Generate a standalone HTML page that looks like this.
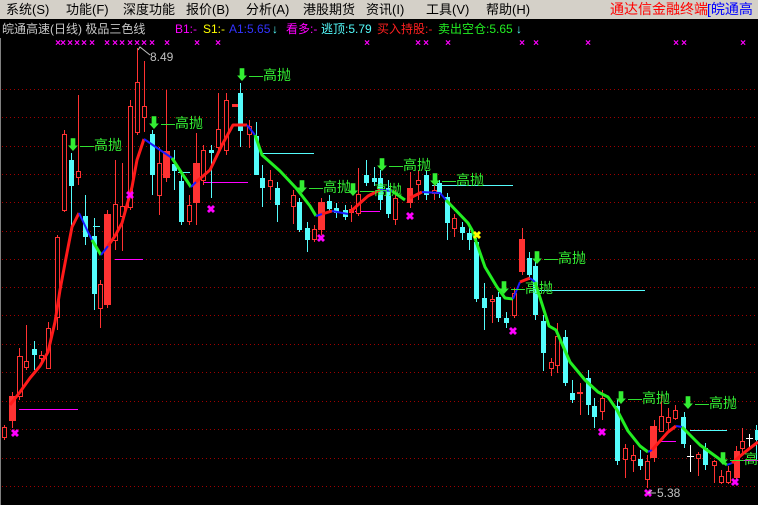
<!DOCTYPE html><html><head><meta charset="utf-8"><style>
body{margin:0;width:758px;height:505px;overflow:hidden;background:#000;font-family:"Liberation Sans","WenQuanYi Zen Hei",sans-serif}
#menu{position:absolute;left:0;top:0;width:758px;height:19px;background:#d4d0c8;font-size:13px;line-height:19px;white-space:nowrap}
#menu span{position:absolute;top:0}
#t{position:absolute;top:19px;left:0;width:758px;height:20px;font-size:12px;line-height:20px;white-space:nowrap}
#t span{position:absolute;top:0}
svg{position:absolute;left:0;top:0}
</style></head><body>
<svg width="758" height="505" viewBox="0 0 758 505">
<line x1="0.5" y1="38" x2="0.5" y2="505" stroke="#808080"/>
<g stroke="#a00000" stroke-dasharray="1,3">
<line x1="2" y1="89.5" x2="758" y2="89.5"/><line x1="2" y1="117.5" x2="758" y2="117.5"/><line x1="2" y1="146.5" x2="758" y2="146.5"/><line x1="2" y1="174.5" x2="758" y2="174.5"/><line x1="2" y1="202.5" x2="758" y2="202.5"/><line x1="2" y1="231.5" x2="758" y2="231.5"/><line x1="2" y1="259.5" x2="758" y2="259.5"/><line x1="2" y1="287.5" x2="758" y2="287.5"/><line x1="2" y1="315.5" x2="758" y2="315.5"/><line x1="2" y1="344.5" x2="758" y2="344.5"/><line x1="2" y1="372.5" x2="758" y2="372.5"/><line x1="2" y1="401.5" x2="758" y2="401.5"/><line x1="2" y1="429.5" x2="758" y2="429.5"/><line x1="2" y1="458.5" x2="758" y2="458.5"/><line x1="2" y1="486.5" x2="758" y2="486.5"/>
</g>
<g stroke-width="1">
<line x1="19" y1="409.5" x2="78" y2="409.5" stroke="#ff00ff"/>
<line x1="115" y1="259.5" x2="143" y2="259.5" stroke="#ff00ff"/>
<line x1="203" y1="182.5" x2="248" y2="182.5" stroke="#ff00ff"/>
<line x1="263" y1="153.5" x2="314" y2="153.5" stroke="#54fcfc"/>
<line x1="355" y1="211.5" x2="380" y2="211.5" stroke="#ff00ff"/>
<line x1="432" y1="185.5" x2="513" y2="185.5" stroke="#54fcfc"/>
<line x1="530" y1="290.5" x2="645" y2="290.5" stroke="#54fcfc"/>
<line x1="661" y1="441.5" x2="676" y2="441.5" stroke="#ff00ff"/>
<line x1="690" y1="430.5" x2="727" y2="430.5" stroke="#54fcfc"/>
<line x1="742" y1="460.5" x2="758" y2="460.5" stroke="#ff00ff"/>
<line x1="93" y1="226.5" x2="100" y2="226.5" stroke="#54fcfc"/>
<line x1="178" y1="172.5" x2="190" y2="172.5" stroke="#54fcfc"/>
</g>
<g stroke="#ff3232">
<line x1="4.5" y1="425" x2="4.5" y2="440"/><line x1="12.5" y1="392" x2="12.5" y2="428"/><line x1="19.5" y1="348" x2="19.5" y2="400"/><line x1="26.5" y1="325" x2="26.5" y2="370"/><line x1="41.5" y1="351" x2="41.5" y2="364"/><line x1="48.5" y1="322" x2="48.5" y2="369"/><line x1="57.5" y1="235" x2="57.5" y2="330"/><line x1="64.5" y1="130" x2="64.5" y2="212"/><line x1="78.5" y1="95" x2="78.5" y2="185"/><line x1="100.5" y1="280" x2="100.5" y2="328"/><line x1="107.5" y1="210" x2="107.5" y2="308"/><line x1="115.5" y1="160" x2="115.5" y2="250"/><line x1="122.5" y1="163" x2="122.5" y2="251"/><line x1="130.5" y1="100" x2="130.5" y2="210"/><line x1="137.5" y1="48" x2="137.5" y2="135"/><line x1="144.5" y1="61" x2="144.5" y2="132"/><line x1="159.5" y1="147" x2="159.5" y2="215"/><line x1="166.5" y1="90" x2="166.5" y2="182"/><line x1="189.5" y1="195" x2="189.5" y2="225"/><line x1="196.5" y1="133" x2="196.5" y2="225"/><line x1="203.5" y1="145" x2="203.5" y2="185"/><line x1="218.5" y1="93" x2="218.5" y2="150"/><line x1="226.5" y1="93" x2="226.5" y2="155"/><line x1="249.5" y1="120" x2="249.5" y2="148"/><line x1="270.5" y1="170" x2="270.5" y2="200"/><line x1="293.5" y1="190" x2="293.5" y2="224"/><line x1="314.5" y1="225" x2="314.5" y2="242"/><line x1="321.5" y1="198" x2="321.5" y2="235"/><line x1="351.5" y1="205" x2="351.5" y2="222"/><line x1="358.5" y1="168" x2="358.5" y2="216"/><line x1="395.5" y1="190" x2="395.5" y2="225"/><line x1="410.5" y1="172" x2="410.5" y2="208"/><line x1="418.5" y1="170" x2="418.5" y2="200"/><line x1="434.5" y1="185" x2="434.5" y2="200"/><line x1="454.5" y1="214" x2="454.5" y2="237"/><line x1="492.5" y1="295" x2="492.5" y2="323"/><line x1="514.5" y1="288" x2="514.5" y2="318"/><line x1="522.5" y1="228" x2="522.5" y2="275"/><line x1="551.5" y1="358" x2="551.5" y2="376"/><line x1="557.5" y1="323" x2="557.5" y2="373"/><line x1="580.5" y1="383" x2="580.5" y2="415"/><line x1="602.5" y1="390" x2="602.5" y2="420"/><line x1="625.5" y1="444" x2="625.5" y2="478"/><line x1="633.5" y1="445" x2="633.5" y2="472"/><line x1="647.5" y1="455" x2="647.5" y2="488"/><line x1="654.5" y1="420" x2="654.5" y2="462"/><line x1="661.5" y1="395" x2="661.5" y2="432"/><line x1="668.5" y1="408" x2="668.5" y2="430"/><line x1="675.5" y1="405" x2="675.5" y2="420"/><line x1="698.5" y1="452" x2="698.5" y2="476"/><line x1="714.5" y1="460" x2="714.5" y2="483"/><line x1="721.5" y1="470" x2="721.5" y2="484"/><line x1="728.5" y1="466" x2="728.5" y2="484"/><line x1="736.5" y1="446" x2="736.5" y2="480"/><line x1="742.5" y1="428" x2="742.5" y2="455"/>
</g>
<g stroke="#54fcfc">
<line x1="34.5" y1="341" x2="34.5" y2="370"/><line x1="71.5" y1="153" x2="71.5" y2="230"/><line x1="85.5" y1="195" x2="85.5" y2="245"/><line x1="94.5" y1="218" x2="94.5" y2="310"/><line x1="152.5" y1="130" x2="152.5" y2="195"/><line x1="174.5" y1="150" x2="174.5" y2="190"/><line x1="181.5" y1="175" x2="181.5" y2="225"/><line x1="211.5" y1="145" x2="211.5" y2="198"/><line x1="240.5" y1="83" x2="240.5" y2="147"/><line x1="256.5" y1="122" x2="256.5" y2="175"/><line x1="262.5" y1="165" x2="262.5" y2="207"/><line x1="277.5" y1="182" x2="277.5" y2="222"/><line x1="299.5" y1="198" x2="299.5" y2="232"/><line x1="307.5" y1="222" x2="307.5" y2="252"/><line x1="329.5" y1="195" x2="329.5" y2="213"/><line x1="336.5" y1="203" x2="336.5" y2="218"/><line x1="345.5" y1="205" x2="345.5" y2="220"/><line x1="366.5" y1="160" x2="366.5" y2="186"/><line x1="374.5" y1="167" x2="374.5" y2="186"/><line x1="380.5" y1="170" x2="380.5" y2="210"/><line x1="388.5" y1="180" x2="388.5" y2="218"/><line x1="426.5" y1="170" x2="426.5" y2="200"/><line x1="439.5" y1="180" x2="439.5" y2="198"/><line x1="447.5" y1="193" x2="447.5" y2="240"/><line x1="462.5" y1="222" x2="462.5" y2="240"/><line x1="469.5" y1="228" x2="469.5" y2="250"/><line x1="476.5" y1="238" x2="476.5" y2="302"/><line x1="484.5" y1="283" x2="484.5" y2="330"/><line x1="498.5" y1="292" x2="498.5" y2="322"/><line x1="506.5" y1="312" x2="506.5" y2="328"/><line x1="529.5" y1="252" x2="529.5" y2="280"/><line x1="535.5" y1="262" x2="535.5" y2="320"/><line x1="543.5" y1="315" x2="543.5" y2="371"/><line x1="565.5" y1="330" x2="565.5" y2="386"/><line x1="572.5" y1="380" x2="572.5" y2="403"/><line x1="588.5" y1="370" x2="588.5" y2="415"/><line x1="594.5" y1="398" x2="594.5" y2="428"/><line x1="617.5" y1="400" x2="617.5" y2="465"/><line x1="640.5" y1="450" x2="640.5" y2="470"/><line x1="684.5" y1="412" x2="684.5" y2="448"/><line x1="705.5" y1="443" x2="705.5" y2="470"/><line x1="756.5" y1="425" x2="756.5" y2="460"/>
</g>
<g stroke="#fff"><line x1="690.5" y1="445" x2="690.5" y2="472"/><line x1="687" y1="456.5" x2="694" y2="456.5"/><line x1="749.5" y1="434" x2="749.5" y2="447"/><line x1="746" y1="438.5" x2="753" y2="438.5"/></g>
<g fill="#000" stroke="#ff3232">
<rect x="2.5" y="427.5" width="4" height="10"/><rect x="17.5" y="356.5" width="5" height="40"/><rect x="24.5" y="361.5" width="4" height="6"/><rect x="39.5" y="355.5" width="4" height="3"/><rect x="46.5" y="328.5" width="4" height="40"/><rect x="55.5" y="237.5" width="4" height="80"/><rect x="62.5" y="134.5" width="4" height="76"/><rect x="76.5" y="171.5" width="4" height="6"/><rect x="98.5" y="284.5" width="4" height="24"/><rect x="113.5" y="204.5" width="4" height="36"/><rect x="120.5" y="206.5" width="4" height="10"/><rect x="128.5" y="106.5" width="4" height="101"/><rect x="135.5" y="82.5" width="4" height="50"/><rect x="142.5" y="106.5" width="4" height="11"/><rect x="157.5" y="163.5" width="4" height="32"/><rect x="187.5" y="205.5" width="4" height="16"/><rect x="201.5" y="150.5" width="4" height="30"/><rect x="216.5" y="129.5" width="4" height="18"/><rect x="224.5" y="100.5" width="4" height="50"/><rect x="247.5" y="126.5" width="4" height="8"/><rect x="268.5" y="180.5" width="4" height="6"/><rect x="291.5" y="195.5" width="4" height="11"/><rect x="312.5" y="229.5" width="4" height="10"/><rect x="356.5" y="194.5" width="4" height="19"/><rect x="393.5" y="198.5" width="4" height="21"/><rect x="416.5" y="180.5" width="4" height="4"/><rect x="432.5" y="190.5" width="4" height="3"/><rect x="452.5" y="218.5" width="4" height="10"/><rect x="490.5" y="299.5" width="4" height="2"/><rect x="512.5" y="293.5" width="4" height="22"/><rect x="549.5" y="362.5" width="4" height="6"/><rect x="555.5" y="336.5" width="4" height="29"/><rect x="600.5" y="398.5" width="4" height="13"/><rect x="623.5" y="448.5" width="4" height="11"/><rect x="631.5" y="455.5" width="4" height="5"/><rect x="645.5" y="461.5" width="4" height="18"/><rect x="659.5" y="416.5" width="4" height="15"/><rect x="666.5" y="417.5" width="4" height="5"/><rect x="673.5" y="410.5" width="4" height="8"/><rect x="696.5" y="454.5" width="4" height="4"/><rect x="712.5" y="461.5" width="4" height="4"/><rect x="719.5" y="476.5" width="4" height="6"/><rect x="726.5" y="471.5" width="4" height="11"/><rect x="740.5" y="441.5" width="4" height="7"/>
</g>
<g fill="#ff3232">
<rect x="9" y="396" width="7" height="25"/><rect x="104" y="214" width="7" height="91"/><rect x="163" y="151" width="7" height="27"/><rect x="193" y="163" width="7" height="40"/><rect x="232" y="104" width="6" height="3"/><rect x="318" y="202" width="7" height="28"/><rect x="349" y="209" width="5" height="4"/><rect x="407" y="188" width="6" height="15"/><rect x="519" y="239" width="6" height="33"/><rect x="577" y="392" width="6" height="2"/><rect x="650" y="426" width="7" height="32"/><rect x="734" y="451" width="6" height="27"/>
</g>
<g fill="#54fcfc">
<rect x="32" y="349" width="5" height="6"/><rect x="69" y="160" width="5" height="26"/><rect x="83" y="216" width="5" height="21"/><rect x="92" y="236" width="5" height="58"/><rect x="150" y="134" width="5" height="41"/><rect x="172" y="164" width="5" height="7"/><rect x="179" y="181" width="5" height="41"/><rect x="209" y="150" width="5" height="3"/><rect x="238" y="93" width="5" height="38"/><rect x="254" y="136" width="5" height="39"/><rect x="260" y="178" width="5" height="10"/><rect x="275" y="188" width="5" height="17"/><rect x="297" y="202" width="5" height="28"/><rect x="305" y="228" width="5" height="12"/><rect x="327" y="201" width="5" height="8"/><rect x="334" y="208" width="5" height="5"/><rect x="343" y="210" width="5" height="7"/><rect x="364" y="175" width="5" height="8"/><rect x="372" y="178" width="5" height="4"/><rect x="378" y="178" width="5" height="22"/><rect x="386" y="188" width="5" height="26"/><rect x="424" y="175" width="5" height="20"/><rect x="437" y="183" width="5" height="11"/><rect x="445" y="197" width="5" height="26"/><rect x="460" y="227" width="5" height="6"/><rect x="467" y="233" width="5" height="7"/><rect x="474" y="242" width="5" height="57"/><rect x="482" y="298" width="5" height="10"/><rect x="496" y="297" width="5" height="21"/><rect x="504" y="318" width="5" height="5"/><rect x="527" y="258" width="5" height="17"/><rect x="533" y="266" width="5" height="49"/><rect x="541" y="321" width="5" height="32"/><rect x="563" y="337" width="5" height="46"/><rect x="570" y="393" width="5" height="7"/><rect x="586" y="378" width="5" height="27"/><rect x="592" y="406" width="5" height="11"/><rect x="615" y="406" width="5" height="55"/><rect x="638" y="459" width="5" height="7"/><rect x="681" y="417" width="5" height="27"/><rect x="703" y="448" width="5" height="17"/><rect x="755" y="430" width="3" height="10"/>
</g>
<g fill="none" stroke-width="3" stroke-linejoin="round">
<polyline stroke="#ff1a1a" points="10,405 20,392 30,378 40,366 48,352 55,322 60,290 66,258 72,227 79,213"/>
<polyline stroke="#1a1aff" stroke-width="2" points="79,213 88,232 92,240"/>
<polyline stroke="#22ee22" points="92,240 101,255"/>
<polyline stroke="#1a1aff" stroke-width="2" points="101,255 108,246"/>
<polyline stroke="#ff1a1a" points="108,246 115,236 122,223 132,187 137,160 144,139"/>
<polyline stroke="#1a1aff" stroke-width="2" points="144,139 160,150 172,158"/>
<polyline stroke="#22ee22" points="172,158 183,175 191,187"/>
<polyline stroke="#1a1aff" stroke-width="2" points="191,187 196,182"/>
<polyline stroke="#ff1a1a" points="196,182 210,170 222,145 233,125 247,125"/>
<polyline stroke="#1a1aff" stroke-width="2" points="247,125 255,135"/>
<polyline stroke="#22ee22" points="255,135 262,155 280,171 296,188 310,206 316,216"/>
<polyline stroke="#1a1aff" stroke-width="2" points="316,216 322,214"/>
<polyline stroke="#ff1a1a" points="322,214 332,211"/>
<polyline stroke="#1a1aff" stroke-width="2" points="332,211 348,214"/>
<polyline stroke="#ff1a1a" points="350,212 368,196 380,190"/>
<polyline stroke="#1a1aff" stroke-width="2" points="380,190 392,191"/>
<polyline stroke="#22ee22" points="392,191 405,200"/>
<polyline stroke="#ff1a1a" points="410,198 422,192"/>
<polyline stroke="#1a1aff" stroke-width="2" points="422,192 440,193 446,200"/>
<polyline stroke="#22ee22" points="446,200 468,223 472,230 485,267 497,287 505,298 513,299"/>
<polyline stroke="#1a1aff" stroke-width="2" points="513,299 520,282"/>
<polyline stroke="#ff1a1a" points="520,282 530,278"/>
<polyline stroke="#1a1aff" stroke-width="2" points="530,278 535,282"/>
<polyline stroke="#22ee22" points="535,282 549,326 556,330 570,362 585,380 598,392 608,397 617,410 628,431 640,446 648,452"/>
<polyline stroke="#1a1aff" stroke-width="2" points="648,452 652,450"/>
<polyline stroke="#ff1a1a" points="652,450 668,432 676,426"/>
<polyline stroke="#1a1aff" stroke-width="2" points="676,426 682,427"/>
<polyline stroke="#22ee22" points="682,427 700,445 718,458 727,465"/>
<polyline stroke="#1a1aff" stroke-width="2" points="727,465 732,463"/>
<polyline stroke="#ff1a1a" points="732,463 745,452 758,442"/>
</g>
<g fill="#ff00ff" font-size="11" font-weight="bold" font-family="Liberation Sans,sans-serif" text-anchor="middle">
<text x="15" y="437">✖</text><text x="130" y="199">✖</text><text x="211" y="213">✖</text><text x="321" y="242">✖</text><text x="410" y="220">✖</text><text x="513" y="335">✖</text><text x="602" y="436">✖</text><text x="648" y="497">✖</text><text x="735" y="486">✖</text>
</g>
<text x="477" y="239" fill="#ffff00" font-size="11" font-weight="bold" text-anchor="middle">✖</text>
<g fill="#ff00ff" font-size="10" font-weight="bold" text-anchor="middle">
<text x="58" y="46">×</text><text x="63" y="46">×</text><text x="70" y="46">×</text><text x="77" y="46">×</text><text x="84" y="46">×</text><text x="92" y="46">×</text><text x="107" y="46">×</text><text x="115" y="46">×</text><text x="122" y="46">×</text><text x="130" y="46">×</text><text x="137" y="46">×</text><text x="144" y="46">×</text><text x="152" y="46">×</text><text x="167" y="46">×</text><text x="197" y="46">×</text><text x="218" y="46">×</text><text x="367" y="46">×</text><text x="418" y="46">×</text><text x="426" y="46">×</text><text x="448" y="46">×</text><text x="522" y="46">×</text><text x="536" y="46">×</text><text x="588" y="46">×</text><text x="676" y="46">×</text><text x="684" y="46">×</text><text x="743" y="46">×</text>
</g>
<g stroke="#c0c0c0" fill="none"><polyline points="138,50 140,47 150,55"/><polyline points="652,490 648,493 656,493"/></g>
<text x="150" y="61" fill="#c0c0c0" font-size="12">8.49</text>
<text x="657" y="497" fill="#c0c0c0" font-size="12">5.38</text>
<g fill="#33ee33" font-size="14" font-family="Liberation Sans,WenQuanYi Zen Hei,sans-serif">
<text x="66" y="150">⬇—高抛</text><text x="147" y="128">⬇—高抛</text><text x="235" y="80">⬇—高抛</text><text x="295" y="192">⬇—高抛</text><text x="346" y="195">⬇—高抛</text><text x="375" y="170">⬇—高抛</text><text x="428" y="185">⬇—高抛</text><text x="530" y="263">⬇—高抛</text><text x="497" y="293">⬇—高抛</text><text x="614" y="403">⬇—高抛</text><text x="681" y="408">⬇—高抛</text><text x="716" y="464">⬇—高抛</text>
</g>
</svg>
<div id="menu">
<span style="left:6px">系统(S)</span><span style="left:66px">功能(F)</span><span style="left:123px">深度功能</span><span style="left:186px">报价(B)</span><span style="left:246px">分析(A)</span><span style="left:303px">港股期货</span><span style="left:366px">资讯(I)</span><span style="left:426px">工具(V)</span><span style="left:486px">帮助(H)</span>
<span style="left:610px;color:#ff0000;font-size:14px">通达信金融终端</span><span style="left:707px;color:#0000ff;font-size:14px">[皖通高</span>
</div>
<div id="t">
<span style="left:2px;color:#c8c8c8">皖通高速(日线) 极品三色线</span>
<span style="left:175px;color:#ff00ff">B1:-</span><span style="left:203px;color:#ffff00">S1:-</span><span style="left:229px;color:#3333ff">A1:5.65</span><span style="left:272px;color:#54fcfc">↓</span>
<span style="left:286px;color:#ff00ff">看多:-</span><span style="left:321px;color:#54fcfc">逃顶:5.79</span><span style="left:377px;color:#ff2020">买入持股:-</span><span style="left:438px;color:#22ee22">卖出空仓:5.65</span><span style="left:516px;color:#54fcfc">↓</span>
</div>
</body></html>
